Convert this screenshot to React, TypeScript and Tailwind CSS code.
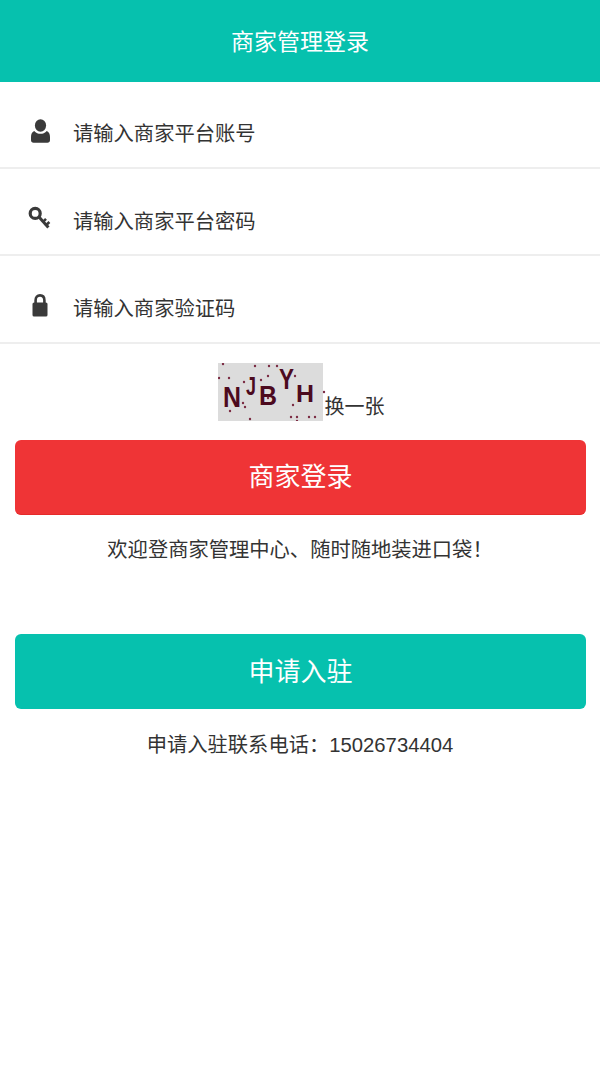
const stack = { fontFamily: '"Liberation Sans", "Noto Sans CJK SC", sans-serif' };

function UserIcon() {
  return (
    <svg width="19" height="24" viewBox="0 0 19 24" fill="#3a3a3a" className="ml-[3px]">
      <ellipse cx="9.5" cy="6.5" rx="5.6" ry="6.2" />
      <path d="M3.2 12 C5 14 7.2 14.8 9.5 14.8 C11.8 14.8 14 14 15.8 12 C18 13 19 15 19 18 L19 21 C19 22.8 18 23.8 16.4 23.8 L2.6 23.8 C1 23.8 0 22.8 0 21 L0 18 C0 15 1 13 3.2 12 Z" />
    </svg>
  );
}

function KeyIcon() {
  return (
    <svg width="23" height="24" viewBox="0 0 23 24" fill="none" stroke="#3a3a3a">
      <circle cx="7.2" cy="7.4" r="5" strokeWidth="3.2" />
      <path d="M11 11 L20.4 21.6" strokeWidth="3" />
      <path d="M15 15.8 L18 12.8 M18.2 19 L21.4 16" strokeWidth="2.6" />
    </svg>
  );
}

function LockIcon() {
  return (
    <svg width="16" height="23" viewBox="0 0 16 23" fill="#3a3a3a" className="ml-[4px]">
      <path d="M3.6 10 L3.6 6.2 C3.6 3.2 5.4 1.4 8 1.4 C10.6 1.4 12.4 3.2 12.4 6.2 L12.4 10" fill="none" stroke="#3a3a3a" strokeWidth="2.6" />
      <rect x="0.5" y="8.5" width="15" height="14" rx="1.6" />
    </svg>
  );
}

function Captcha() {
  const dots = [[5, 1], [37, 3], [51, 3], [59, 3], [1, 15], [11, 15], [26, 19], [43, 17], [50, 13], [77, 13], [25, 40], [27, 44], [50, 35], [75, 42], [12, 48], [32, 56], [73, 54], [79, 54], [79, 58], [91, 54], [97, 54], [106, 29]];
  const letters = [
    { c: "N", x: 5, y: 44, s: 30, w: 18 },
    { c: "J", x: 28, y: 32, s: 25, w: 10 },
    { c: "B", x: 41, y: 42, s: 28, w: 18 },
    { c: "Y", x: 61, y: 26, s: 29, w: 15 },
    { c: "H", x: 78, y: 39, s: 24, w: 18 },
  ];
  return (
    <svg width="108" height="58" viewBox="0 0 108 58" className="block">
      <rect width="105" height="58" fill="#dcdcdc" />
      <g fill="#4c0a1e" fontFamily="Liberation Sans, sans-serif" fontWeight="700">
        {letters.map((l) => (
          <text key={l.c} x={l.x} y={l.y} fontSize={l.s} textLength={l.w} lengthAdjust="spacingAndGlyphs">{l.c}</text>
        ))}
      </g>
      {dots.map(([x, y], i) => (
        <circle key={i} cx={x} cy={y} r="1.2" fill="#7a2a42" />
      ))}
    </svg>
  );
}

function Row({ icon, text }: { icon: React.ReactNode; text: string }) {
  return (
    <div className="flex h-[87.2px] items-center border-b-2 border-[#eeeeee] pl-[28px] pt-[15px]">
      <div className="flex w-[45px] shrink-0 items-center pb-[2px]">{icon}</div>
      <span className="pt-[5px] text-[20.3px] text-[#333333]">{text}</span>
    </div>
  );
}

export default function App() {
  return (
    <div className="min-h-[1067px] bg-white" style={stack}>
      <div className="flex h-[82px] items-center justify-center bg-[#06c1ae] pt-[2px] text-[23px] text-white">商家管理登录</div>
      <Row icon={<UserIcon />} text="请输入商家平台账号" />
      <Row icon={<KeyIcon />} text="请输入商家平台密码" />
      <Row icon={<LockIcon />} text="请输入商家验证码" />
      <div className="mt-[19px] flex items-end justify-center pl-[2px] text-[20px] leading-[28px] text-[#333333]">
        <div className="-mr-[1px]"><Captcha /></div>
        <span>换一张</span>
      </div>
      <div className="mx-[15px] mt-[19px] flex h-[75px] w-[571px] items-center justify-center rounded-[6px] border-b-[1.5px] border-[#e52a2a] bg-[#ef3436] pt-[2px] text-[26px] text-white">商家登录</div>
      <div className="mt-[20px] text-center text-[20.3px] leading-[30px] text-[#333333]">欢迎登商家管理中心、随时随地装进口袋！</div>
      <div className="mx-[15px] mt-[69px] flex h-[75px] w-[571px] items-center justify-center rounded-[6px] bg-[#06c1ae] pt-[3px] text-[26px] text-white">申请入驻</div>
      <div className="mt-[21px] text-center text-[20.3px] leading-[30px] text-[#333333]">申请入驻联系电话：15026734404</div>
    </div>
  );
}
